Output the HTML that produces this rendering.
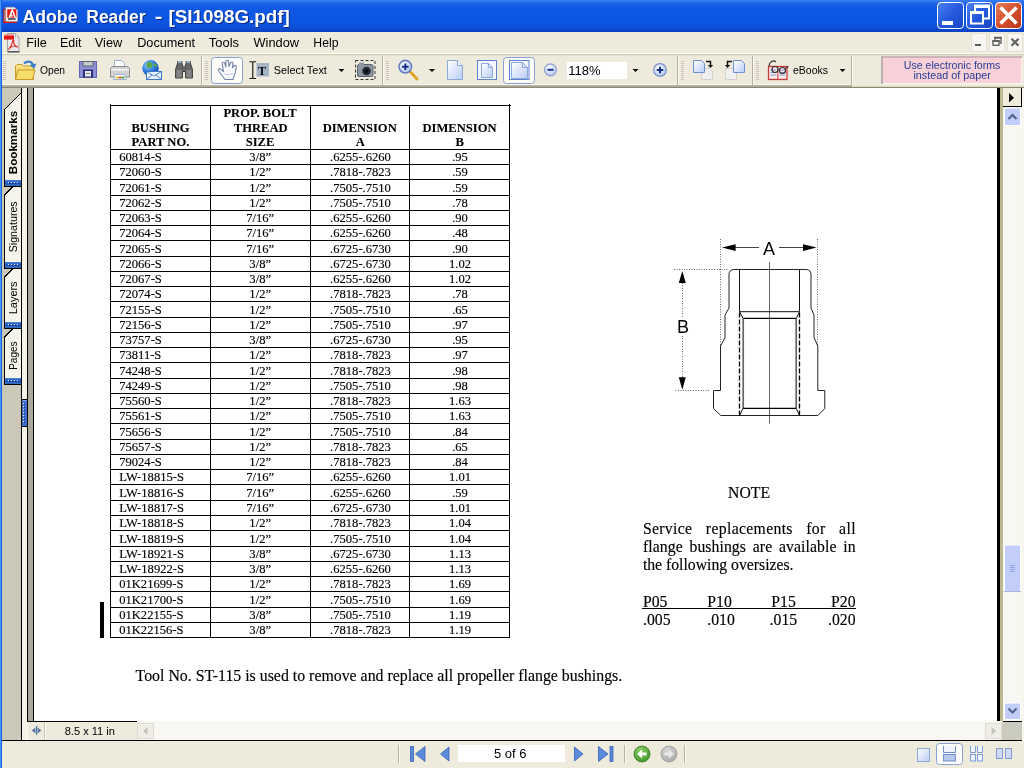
<!DOCTYPE html>
<html lang="en">
<head>
<meta charset="utf-8">
<title>Adobe Reader - [SI1098G.pdf]</title>
<style>
html,body{margin:0;padding:0}
body{width:1024px;height:768px;overflow:hidden;position:relative;background:#eeebdd;font-family:"Liberation Sans",sans-serif}
.a{position:absolute}
#ov{position:absolute;left:0;top:0;width:1024px;height:768px;will-change:transform}
text{white-space:pre}
</style>
</head>
<body>
<!-- ===== backgrounds ===== -->
<div class="a" id="titlebar" style="left:0;top:0;width:1024px;height:32px;background:linear-gradient(#3b82f3 0,#2a70ec 2px,#1a60e5 4px,#0e58e3 9px,#0c55e0 22px,#0d4dd4 28px,#0b45c8 31px,#0a3fbe 32px)"></div>
<div class="a" id="menubar" style="left:2px;top:32px;width:1022px;height:22px;background:#eeebdd"></div>
<div class="a" style="left:2px;top:53px;width:1022px;height:1px;background:#fbfaf5"></div>
<div class="a" style="left:2px;top:54px;width:1022px;height:1px;background:#cfccb4"></div>
<div class="a" style="left:2px;top:55px;width:1022px;height:1px;background:#e6e3cf"></div>
<div class="a" id="toolbar" style="left:2px;top:56px;width:1022px;height:29px;background:#eeebdd"></div>
<div class="a" style="left:2px;top:84px;width:850px;height:1px;background:#f7f6ee"></div>
<div class="a" style="left:2px;top:85px;width:850px;height:1px;background:#b9b6a8"></div>
<div class="a" style="left:2px;top:86px;width:850px;height:1px;background:#aba996"></div>
<div class="a" style="left:852px;top:86px;width:172px;height:1px;background:#d9d6ba"></div>
<div class="a" style="left:2px;top:87px;width:1022px;height:1px;background:#8b8973"></div>
<!-- document area -->
<div class="a" id="navpane" style="left:2px;top:88px;width:19px;height:652px;background:#ccc8b8"></div>
<div class="a" style="left:21px;top:88px;width:1px;height:652px;background:#000"></div>
<div class="a" style="left:22px;top:88px;width:5px;height:652px;background:#f4f3e6"></div>
<div class="a" style="left:27px;top:88px;width:1px;height:634px;background:#000"></div>
<div class="a" style="left:28px;top:88px;width:5px;height:633px;background:#aaa899"></div>
<div class="a" style="left:33px;top:88px;width:1px;height:634px;background:#000"></div>
<div class="a" id="page" style="left:34px;top:88px;width:963px;height:633px;background:#fff"></div>
<div class="a" style="left:997px;top:88px;width:3px;height:633px;background:#000"></div>
<div class="a" style="left:1000px;top:88px;width:3px;height:633px;background:#bdb992"></div>
<div class="a" id="vscroll" style="left:1003px;top:88px;width:21px;height:633px;background:#f8f7f2"></div>
<!-- horizontal scrollbar row -->
<div class="a" style="left:27px;top:721px;width:110px;height:1px;background:#000"></div>
<div class="a" style="left:27px;top:722px;width:110px;height:18px;background:#eeebdd"></div>
<div class="a" id="hscroll" style="left:137px;top:721px;width:865px;height:19px;background:#f8f7f2"></div>
<div class="a" style="left:1002px;top:722px;width:20px;height:18px;background:#cbcabf"></div>
<div class="a" style="left:1003px;top:721px;width:19px;height:1px;background:#000"></div>
<div class="a" style="left:1022px;top:88px;width:2px;height:680px;background:#f7f6ee"></div>
<div class="a" style="left:2px;top:740px;width:1020px;height:1px;background:#000"></div>
<div class="a" id="statusbar" style="left:2px;top:741px;width:1022px;height:27px;background:#eeebdd"></div>
<!-- window left border -->
<div class="a" style="left:0;top:0;width:1px;height:768px;background:#3c97ff"></div>
<div class="a" style="left:1px;top:0;width:1px;height:768px;background:#1c5fd9"></div>

<!-- ===== overlay: icons, text, pdf content ===== -->
<svg id="ov" width="1024" height="768" viewBox="0 0 1024 768">
<defs>
<linearGradient id="gBtn" x1="0" y1="0" x2="1" y2="1"><stop offset="0" stop-color="#4d83f0"/><stop offset=".5" stop-color="#2459dd"/><stop offset="1" stop-color="#1a47c4"/></linearGradient>
<linearGradient id="gCls" x1="0" y1="0" x2="1" y2="1"><stop offset="0" stop-color="#e8805e"/><stop offset=".5" stop-color="#d5502c"/><stop offset="1" stop-color="#b8351a"/></linearGradient>
<linearGradient id="gPg" x1="0" y1="0" x2="1" y2="1"><stop offset="0" stop-color="#fff"/><stop offset="1" stop-color="#b9cdf3"/></linearGradient>
<linearGradient id="gFold" x1="0" y1="0" x2="0" y2="1"><stop offset="0" stop-color="#fbe88c"/><stop offset="1" stop-color="#e6b93a"/></linearGradient>
<radialGradient id="gGlobe" cx=".35" cy=".3" r=".8"><stop offset="0" stop-color="#9fd3ff"/><stop offset=".5" stop-color="#2e7be0"/><stop offset="1" stop-color="#103f9e"/></radialGradient>
<radialGradient id="gLens" cx=".4" cy=".35" r=".7"><stop offset="0" stop-color="#fff"/><stop offset="1" stop-color="#a9c4ee"/></radialGradient>
<radialGradient id="gGreen" cx=".4" cy=".3" r=".8"><stop offset="0" stop-color="#8fd06a"/><stop offset="1" stop-color="#3a8f22"/></radialGradient>
<radialGradient id="gGrey" cx=".4" cy=".3" r=".8"><stop offset="0" stop-color="#d8d8d8"/><stop offset="1" stop-color="#a4a4a4"/></radialGradient>
<linearGradient id="gBar" x1="0" y1="0" x2="0" y2="1"><stop offset="0" stop-color="#4f86d8"/><stop offset=".4" stop-color="#2457c4"/><stop offset="1" stop-color="#3a6fb8"/></linearGradient>
</defs>

<!-- title bar -->
<g id="appicon">
  <path d="M3.300 9h3v12.300h10.500v1.700H3.300z" fill="#d41a14"/>
  <rect x="4.300" y="10" width="1" height="11" fill="#9a9a9a"/>
  <path d="M5.800 7.300h8.700l3 3v11H5.800z" fill="#fff" stroke="#a8a8a8" stroke-width=".7"/>
  <rect x="7.200" y="9.200" width="9.200" height="8.500" fill="#e01a14"/>
  <path d="M8.600 17.700l2.900-8.300h1.500l3 8.300h-1.700l-1.900-5.600l-1 2.900h1.100l.6 1.500h-2.300l-.4 1.200z" fill="#fff"/>
  <rect x="8" y="18.300" width="7.600" height="1.400" fill="#222"/>
</g>
<g font-size="19" font-weight="bold" fill="#0a2a8a"><text x="23.5" y="23.7" textLength="55.0" lengthAdjust="spacingAndGlyphs">Adobe</text><text x="87.3" y="23.7" textLength="59.2" lengthAdjust="spacingAndGlyphs">Reader</text><text x="155.8" y="23.7" textLength="7.6" lengthAdjust="spacingAndGlyphs">-</text><text x="169.4" y="23.7" textLength="121.5" lengthAdjust="spacingAndGlyphs">[SI1098G.pdf]</text></g>
<g font-size="19" font-weight="bold" fill="#fff"><text x="22.5" y="22.7" textLength="55.0" lengthAdjust="spacingAndGlyphs">Adobe</text><text x="86.3" y="22.7" textLength="59.2" lengthAdjust="spacingAndGlyphs">Reader</text><text x="154.8" y="22.7" textLength="7.6" lengthAdjust="spacingAndGlyphs">-</text><text x="168.4" y="22.7" textLength="121.5" lengthAdjust="spacingAndGlyphs">[SI1098G.pdf]</text></g>
<g id="winbtns">
  <rect x="937.5" y="2.5" width="26" height="26" rx="3.5" fill="url(#gBtn)" stroke="#fff"/>
  <rect x="942" y="21" width="11" height="4" fill="#fff"/>
  <rect x="966.5" y="2.5" width="26" height="26" rx="3.5" fill="url(#gBtn)" stroke="#fff"/>
  <path d="M975 12v-6.5h14v13h-5" fill="none" stroke="#fff" stroke-width="2"/><rect x="975" y="5" width="14" height="3" fill="#fff"/>
  <rect x="971" y="12" width="12" height="11.5" fill="none" stroke="#fff" stroke-width="2"/><rect x="970" y="11" width="14" height="3" fill="#fff"/>
  <rect x="995.5" y="2.5" width="26" height="26" rx="3.5" fill="url(#gCls)" stroke="#fff"/>
  <path d="M1000.5 7.5l16 16M1016.500 7.5l-16 16" stroke="#fff" stroke-width="3.6" fill="none"/>
</g>

<!-- menu bar -->
<g id="docicon">
  <path d="M7.500 33.500h8l3.500 3.500v14.500h-11.500z" fill="#ececec" stroke="#a6a6a6"/>
  <path d="M15.500 33.500v3.500h3.500z" fill="#fff" stroke="#a6a6a6" stroke-width=".8"/>
  <rect x="7.500" y="51.300" width="12" height="1.200" fill="#3a3a3a"/>
  <rect x="4" y="34.800" width="10" height="4.800" fill="#e61414"/>
  <rect x="4" y="34.800" width="10" height="1.200" fill="#f46a6a"/>
  <path d="M8.500 49.800c2.200-2.600 3.800-5.600 4.200-9c.2-1.400 1.300-1.200 1.100.3c-.4 2.800 1.400 5.200 4 6.200" fill="none" stroke="#dc3030" stroke-width="1.200"/>
  <path d="M9 48c2.600-1.500 5.600-2.100 8.600-1.700" fill="none" stroke="#dc3030" stroke-width=".9"/>
</g>
<g font-size="12.7" fill="#000">
  <text x="26.3" y="46.7" textLength="20.5" lengthAdjust="spacingAndGlyphs">File</text>
  <text x="60" y="46.7" textLength="21.5" lengthAdjust="spacingAndGlyphs">Edit</text>
  <text x="94.8" y="46.7" textLength="27.5" lengthAdjust="spacingAndGlyphs">View</text>
  <text x="137.2" y="46.7" textLength="57.8" lengthAdjust="spacingAndGlyphs">Document</text>
  <text x="208.8" y="46.7" textLength="30.2" lengthAdjust="spacingAndGlyphs">Tools</text>
  <text x="253.5" y="46.7" textLength="45.5" lengthAdjust="spacingAndGlyphs">Window</text>
  <text x="313.3" y="46.7" textLength="25.2" lengthAdjust="spacingAndGlyphs">Help</text>
</g>
<g id="mdibtns" fill="none">
  <rect x="971.5" y="33.500" width="15" height="18" fill="#f7f6f0" stroke="#e4e2d6"/>
  <rect x="989.5" y="33.500" width="15" height="18" fill="#f7f6f0" stroke="#e4e2d6"/>
  <rect x="1007.5" y="33.500" width="15" height="18" fill="#f7f6f0" stroke="#e4e2d6"/>
  <rect x="975" y="44" width="6" height="2" fill="#5e5e5e"/>
  <path d="M995 40v-2.500h6v5.500h-1.500" stroke="#5e5e5e" stroke-width="1.300"/><rect x="994.400" y="37" width="7.200" height="1.600" fill="#5e5e5e"/>
  <rect x="993" y="41" width="6" height="4.300" stroke="#5e5e5e" stroke-width="1.300"/><rect x="992.400" y="40" width="7.200" height="1.800" fill="#5e5e5e"/>
  <path d="M1011.500 38.800l7 7M1018.500 38.800l-7 7" stroke="#5e5e5e" stroke-width="2.100"/>
</g>

<!-- toolbar grippers + separators -->
<g id="grips" shape-rendering="crispEdges">
  <g fill="#cfc3c0">
    <rect x="3" y="61" width="3" height="1"/><rect x="3" y="63" width="3" height="1"/><rect x="3" y="65" width="3" height="1"/><rect x="3" y="67" width="3" height="1"/><rect x="3" y="69" width="3" height="1"/><rect x="3" y="71" width="3" height="1"/><rect x="3" y="73" width="3" height="1"/><rect x="3" y="75" width="3" height="1"/><rect x="3" y="77" width="3" height="1"/><rect x="3" y="79" width="3" height="1"/>
    <rect x="205" y="61" width="3" height="1"/><rect x="205" y="63" width="3" height="1"/><rect x="205" y="65" width="3" height="1"/><rect x="205" y="67" width="3" height="1"/><rect x="205" y="69" width="3" height="1"/><rect x="205" y="71" width="3" height="1"/><rect x="205" y="73" width="3" height="1"/><rect x="205" y="75" width="3" height="1"/><rect x="205" y="77" width="3" height="1"/><rect x="205" y="79" width="3" height="1"/>
    <rect x="386" y="61" width="3" height="1"/><rect x="386" y="63" width="3" height="1"/><rect x="386" y="65" width="3" height="1"/><rect x="386" y="67" width="3" height="1"/><rect x="386" y="69" width="3" height="1"/><rect x="386" y="71" width="3" height="1"/><rect x="386" y="73" width="3" height="1"/><rect x="386" y="75" width="3" height="1"/><rect x="386" y="77" width="3" height="1"/><rect x="386" y="79" width="3" height="1"/>
    <rect x="681" y="61" width="3" height="1"/><rect x="681" y="63" width="3" height="1"/><rect x="681" y="65" width="3" height="1"/><rect x="681" y="67" width="3" height="1"/><rect x="681" y="69" width="3" height="1"/><rect x="681" y="71" width="3" height="1"/><rect x="681" y="73" width="3" height="1"/><rect x="681" y="75" width="3" height="1"/><rect x="681" y="77" width="3" height="1"/><rect x="681" y="79" width="3" height="1"/>
    <rect x="756" y="61" width="3" height="1"/><rect x="756" y="63" width="3" height="1"/><rect x="756" y="65" width="3" height="1"/><rect x="756" y="67" width="3" height="1"/><rect x="756" y="69" width="3" height="1"/><rect x="756" y="71" width="3" height="1"/><rect x="756" y="73" width="3" height="1"/><rect x="756" y="75" width="3" height="1"/><rect x="756" y="77" width="3" height="1"/><rect x="756" y="79" width="3" height="1"/>
  </g>
  <g fill="#b5b2a0">
    <rect x="201" y="56" width="1" height="29"/><rect x="382" y="56" width="1" height="29"/><rect x="677" y="56" width="1" height="29"/><rect x="752" y="56" width="1" height="29"/><rect x="851" y="56" width="1" height="29"/>
  </g>
  <g fill="#fbfaf4">
    <rect x="202" y="56" width="1" height="29"/><rect x="383" y="56" width="1" height="29"/><rect x="678" y="56" width="1" height="29"/><rect x="753" y="56" width="1" height="29"/><rect x="852" y="56" width="1" height="29"/>
  </g>
</g>

<!-- toolbar: Open -->
<g id="icoOpen">
  <path d="M15.500 79.500v-13.500l1.500-1.500h5l1.500 1.500h10v13.500z" fill="url(#gFold)" stroke="#c89a28"/>
  <path d="M15.500 79.500l2.500-9.500h17l-2.500 9.500z" fill="#f7dc6e" stroke="#c89a28"/>
  <path d="M24 63.500c3-3 7.500-2.500 9 1.500" fill="none" stroke="#3f7fc8" stroke-width="2.200"/>
  <path d="M29.500 65l4.800 3.800l2.200-5.300z" fill="#3f7fc8"/>
</g>
<text x="39.9" y="73.500" font-size="10.8" textLength="25.2" lengthAdjust="spacingAndGlyphs">Open</text>
<!-- save -->
<g id="icoSave">
  <rect x="79.500" y="61.500" width="17" height="16" fill="#8d8fd6" stroke="#6064b8"/>
  <rect x="83" y="61.500" width="10" height="4.500" fill="#c9c9cf" stroke="#55575f" stroke-width=".8"/>
  <rect x="83" y="69.500" width="10" height="8" fill="#2c2e7a"/>
  <rect x="85" y="71" width="6" height="5.500" fill="#e9e9ee"/>
  <rect x="86" y="73" width="4" height="1" fill="#777"/>
</g>
<!-- print -->
<g id="icoPrint">
  <path d="M114.500 67v-6.500h7l3 3v3.500z" fill="#fff" stroke="#9bb0d8"/>
  <path d="M112 66.500h16l1.500 2v8.500h-19v-8.500z" fill="#d2d2d2" stroke="#8c8c8c"/>
  <rect x="111" y="69" width="18" height="1.500" fill="#f4f4f4"/>
  <path d="M113.500 79.500l1.500-5h10l1.500 5z" fill="#fff" stroke="#9bb0d8"/>
  <rect x="115.500" y="76.500" width="3" height="2" fill="#e8c020"/><rect x="118.500" y="76.500" width="3" height="2" fill="#e06030"/><rect x="121.500" y="76.500" width="3" height="2" fill="#50a040"/>
</g>
<!-- email globe -->
<g id="icoMail">
  <circle cx="150.500" cy="68.300" r="8.200" fill="url(#gGlobe)"/>
  <path d="M147 62.500c2.500-1.200 5 0 5.500 2s-1.500 4-3.500 3.800s-3-3.300-2-5.800z" fill="#5aa845"/>
  <path d="M153.500 63c2 .3 3.500 1.800 3.800 3.500l-3 .3z" fill="#5aa845"/>
  <rect x="146.500" y="71.500" width="15" height="8" fill="#eaf2ff" stroke="#3f78cc"/>
  <path d="M146.500 71.500l7.500 4.500l7.500-4.500M146.500 79.500l5.500-4.500M161.500 79.500l-5.500-4.500" fill="none" stroke="#3f78cc" stroke-width=".9"/>
</g>
<!-- binoculars -->
<g id="icoFind">
  <path d="M175.500 78v-8.500l2-6v-2h4.500v2l1.500 4h1l1.500-4v-2h4.500v2l2 6v8.500h-7v-6.500h-3v6.500z" fill="#666" stroke="#444"/>
  <rect x="176.500" y="70" width="5" height="7.500" fill="#858585"/><rect x="186.500" y="70" width="5" height="7.500" fill="#858585"/>
  <rect x="178" y="61" width="3.500" height="2" fill="#9cb6d8"/><rect x="186.500" y="61" width="3.500" height="2" fill="#9cb6d8"/>
</g>
<!-- hand tool (selected) -->
<rect x="211.500" y="57.500" width="31" height="26" rx="3" fill="#fdfdfb" stroke="#8aa0d0"/>
<g id="icoHand">
  <path d="M225 79.500L221.200 74.500L218.600 70.800c-.9-1.500.6-2.900 2-1.700L223.400 71.600L222.300 63.800c-.2-1.700 2.100-2.100 2.500-.4L225.900 67L225.800 61.600c0-1.800 2.600-1.900 2.700-.1L229 66.500L230.500 63c.5-1.600 2.800-1.100 2.500.6L232.300 67.800L234 65.900c1-1.300 2.800-.3 2.300 1.200L235.200 72.500C234.700 75 233.600 76.500 233.200 79.500z" fill="#f7f9fd" stroke="#7482a2" stroke-width="1.100" stroke-linejoin="round"/>
  <path d="M224 73.500c2 1.500 6 1.800 9-.2" fill="none" stroke="#c5cde0" stroke-width="1"/>
</g>
<!-- select text -->
<g id="icoSel">
  <path d="M249.500 61.700h2.500l.8.800l.8-.800h2.500M252.800 62.500v15.500M249.500 78.500h2.500l.8-.800l.8.800h2.500" stroke="#111" stroke-width="1.100" fill="none"/>
  <rect x="256.500" y="63" width="12.500" height="13.500" fill="#a3b3c6"/>
  <text x="257.800" y="74.600" font-family="'Liberation Serif',serif" font-weight="bold" font-size="12.700" fill="#111">T</text>
</g>
<text x="273.700" y="73.500" font-size="10.8" textLength="53.200" lengthAdjust="spacingAndGlyphs">Select Text</text>
<path d="M338.500 69h6l-3 3z" fill="#000"/>
<!-- snapshot -->
<g id="icoSnap">
  <rect x="355.500" y="60.500" width="19.500" height="19" fill="none" stroke="#333" stroke-dasharray="3 2"/>
  <rect x="357.500" y="64.500" width="15.500" height="12" rx="1.500" fill="#8e97a4" stroke="#5a6270"/>
  <rect x="359" y="62.500" width="5" height="2.500" fill="#8e97a4"/>
  <circle cx="366.500" cy="71" r="4.300" fill="#222a36"/><circle cx="366.500" cy="71" r="2" fill="#0c0f14"/>
</g>
<!-- zoom in -->
<g id="icoZoom">
  <path d="M410 71.500l7 7.500" stroke="#e0a526" stroke-width="3" stroke-linecap="round"/>
  <circle cx="405.300" cy="66.700" r="6.300" fill="url(#gLens)" stroke="#6a7cc0" stroke-width="1.600"/>
  <path d="M402 66.700h6.600M405.300 63.400v6.600" stroke="#1a2f8c" stroke-width="2"/>
</g>
<path d="M429 69h6l-3 3z" fill="#000"/>
<!-- page icons -->
<g id="icoActual">
  <path d="M447.500 60.500h10l5 5v14h-15z" fill="url(#gPg)" stroke="#8fa8dc"/>
  <path d="M457.500 60.500v5h5" fill="#eef3fc" stroke="#8fa8dc"/>
</g>
<g id="icoFitPage">
  <rect x="477.500" y="60.500" width="19" height="19" fill="#f4f7fd" stroke="#5f82cc"/>
  <path d="M481.500 63.500h7l4 4v10h-11z" fill="url(#gPg)" stroke="#8fa8dc"/>
  <path d="M488.500 63.500v4h4" fill="none" stroke="#8fa8dc"/>
</g>
<rect x="503.500" y="57.500" width="31" height="26" rx="3" fill="#fdfdfb" stroke="#8aa0d0"/>
<g id="icoFitWidth">
  <rect x="509.500" y="60.500" width="19.500" height="19" fill="#f4f7fd" stroke="#5f82cc"/>
  <path d="M511.500 62.500h11l5 5v11h-16z" fill="url(#gPg)" stroke="#8fa8dc"/>
  <path d="M522.500 62.500v5h5" fill="none" stroke="#8fa8dc"/>
</g>
<!-- zoom out / field / zoom in -->
<circle cx="550.500" cy="69.800" r="6" fill="url(#gLens)" stroke="#8fa0d0" stroke-width="1.200"/>
<rect x="547.500" y="68.800" width="6" height="2" fill="#1a2f8c"/>
<rect x="567" y="62" width="60" height="17" fill="#fff"/>
<text x="568.300" y="74.600" font-size="13" fill="#000">118%</text>
<path d="M632.500 69h6l-3 3z" fill="#000"/>
<circle cx="660" cy="70" r="6.300" fill="url(#gLens)" stroke="#7f90c8" stroke-width="1.200"/>
<path d="M656.800 70h6.400M660 66.800v6.400" stroke="#1a2f8c" stroke-width="2"/>
<!-- rotate -->
<g id="icoRotCW">
  <path d="M701.500 68.500h8l3 3v8h-11z" fill="#f0f0f0" stroke="#b4b4b4" stroke-dasharray="1 1"/>
  <path d="M693.500 60.500h8l3 3v9h-11z" fill="url(#gPg)" stroke="#6f90d4"/>
  <path d="M706 61.500h4.500v4" fill="none" stroke="#111" stroke-width="1.500"/><path d="M707.800 65h5.400l-2.700 3z" fill="#111"/>
</g>
<g id="icoRotCCW">
  <path d="M725.500 68.500h8l3 3v8h-11z" fill="#f0f0f0" stroke="#b4b4b4" stroke-dasharray="1 1"/>
  <path d="M733.500 60.500h8l3 3v9h-11z" fill="url(#gPg)" stroke="#6f90d4"/>
  <path d="M732 61.500h-4.500v4" fill="none" stroke="#111" stroke-width="1.500"/><path d="M724.800 65h5.400l-2.700 3z" fill="#111"/>
</g>
<!-- eBooks -->
<g id="icoEbooks">
  <rect x="768.500" y="66.500" width="18.500" height="13" fill="#f6e9ea" stroke="#c83a3a" stroke-width="1.300"/>
  <path d="M777.800 66.500v13" stroke="#c83a3a"/>
  <path d="M770.500 70h5.500M770.500 72.500h5.500M770.500 75h5.500M779.500 70h5.500M779.500 72.500h5.500M779.500 75h5.500" stroke="#7d8ec4" stroke-width=".9"/>
  <path d="M769 66c.5-4 4-6.500 7-4" fill="none" stroke="#333" stroke-width="1.200"/>
  <circle cx="775" cy="69.500" r="3" fill="none" stroke="#333" stroke-width="1.200"/><circle cx="782.500" cy="70.500" r="3" fill="none" stroke="#333" stroke-width="1.200"/>
  <path d="M785 68.500l3.500-2" stroke="#333" stroke-width="1.200"/>
</g>
<text x="793" y="73.700" font-size="10.8" textLength="35" lengthAdjust="spacingAndGlyphs">eBooks</text>
<path d="M839.500 69h6l-3 3z" fill="#000"/>
<!-- pink promo -->
<rect x="881" y="56" width="141" height="28" fill="#f7d0d8"/>
<rect x="881" y="56" width="141" height="2" fill="#cdb4b8"/><rect x="881" y="56" width="2" height="28" fill="#bdb0b0"/>
<rect x="883" y="83" width="139" height="1" fill="#fdf3f4"/><rect x="1021" y="58" width="1" height="26" fill="#fdf3f4"/>
<g font-size="11" fill="#263c96">
  <text x="903.800" y="68.800" textLength="96.600" lengthAdjust="spacingAndGlyphs">Use electronic forms</text>
  <text x="913.400" y="78.600" textLength="77.400" lengthAdjust="spacingAndGlyphs">instead of paper</text>
</g>

<!-- nav pane tabs -->
<g id="navtabs">
  <g fill="#f5f4ea">
    <path d="M21 92.500L5 109v78h16z"/><path d="M12.500 187L5 194.500V269h16v-82z"/><path d="M12.500 269L5 276.500V329h16v-60z"/><path d="M12.500 329L5 336.500V385h16v-56z"/>
  </g>
  <g fill="url(#gBar)">
    <rect x="5" y="180" width="16" height="6"/><rect x="5" y="262" width="16" height="6"/><rect x="5" y="322" width="16" height="6"/><rect x="5" y="378" width="16" height="6"/>
  </g>
  <g fill="#e8eefc">
    <rect x="8" y="182" width="1" height="1"/><rect x="11" y="182" width="1" height="1"/><rect x="14" y="182" width="1" height="1"/><rect x="17" y="182" width="1" height="1"/>
    <rect x="8" y="264" width="1" height="1"/><rect x="11" y="264" width="1" height="1"/><rect x="14" y="264" width="1" height="1"/><rect x="17" y="264" width="1" height="1"/>
    <rect x="8" y="324" width="1" height="1"/><rect x="11" y="324" width="1" height="1"/><rect x="14" y="324" width="1" height="1"/><rect x="17" y="324" width="1" height="1"/>
    <rect x="8" y="380" width="1" height="1"/><rect x="11" y="380" width="1" height="1"/><rect x="14" y="380" width="1" height="1"/><rect x="17" y="380" width="1" height="1"/>
  </g>
  <g fill="#14256e"><rect x="9" y="183" width="1" height="1"/><rect x="12" y="183" width="1" height="1"/><rect x="15" y="183" width="1" height="1"/><rect x="18" y="183" width="1" height="1"/><rect x="9" y="265" width="1" height="1"/><rect x="12" y="265" width="1" height="1"/><rect x="15" y="265" width="1" height="1"/><rect x="18" y="265" width="1" height="1"/><rect x="9" y="325" width="1" height="1"/><rect x="12" y="325" width="1" height="1"/><rect x="15" y="325" width="1" height="1"/><rect x="18" y="325" width="1" height="1"/><rect x="9" y="381" width="1" height="1"/><rect x="12" y="381" width="1" height="1"/><rect x="15" y="381" width="1" height="1"/><rect x="18" y="381" width="1" height="1"/></g>
  <g fill="none" stroke="#000" stroke-width="1" shape-rendering="crispEdges">
    <path d="M21.500 92.500L4.500 109.500V186.500H21"/>
    <path d="M12.500 187L4.500 195V268.500H21"/>
    <path d="M12.500 269L4.500 277V328.500H21"/>
    <path d="M12.500 329L4.500 337V384.500H21"/>
  </g>
  <text transform="translate(17.200 174.200) rotate(-90)" font-size="11.500" font-weight="bold" textLength="63.300" lengthAdjust="spacingAndGlyphs">Bookmarks</text>
  <text transform="translate(17.200 252.300) rotate(-90)" font-size="10.800" textLength="51" lengthAdjust="spacingAndGlyphs">Signatures</text>
  <text transform="translate(17.200 314.200) rotate(-90)" font-size="10.800" textLength="32.800" lengthAdjust="spacingAndGlyphs">Layers</text>
  <text transform="translate(17.200 369.800) rotate(-90)" font-size="10.800" textLength="28.300" lengthAdjust="spacingAndGlyphs">Pages</text>
</g>

<g id="splitter" shape-rendering="crispEdges">
  <rect x="22" y="399" width="5" height="28" fill="#000"/>
  <rect x="22" y="400" width="5" height="26" fill="#3f6fd0"/>
  <rect x="22" y="400" width="5" height="1" fill="#7d9ae8"/>
  <rect x="23" y="403" width="1" height="1" fill="#eef2ff"/><rect x="24" y="404" width="1" height="1" fill="#1a2f7a"/><rect x="23" y="406" width="1" height="1" fill="#eef2ff"/><rect x="24" y="407" width="1" height="1" fill="#1a2f7a"/><rect x="23" y="409" width="1" height="1" fill="#eef2ff"/><rect x="24" y="410" width="1" height="1" fill="#1a2f7a"/><rect x="23" y="412" width="1" height="1" fill="#eef2ff"/><rect x="24" y="413" width="1" height="1" fill="#1a2f7a"/><rect x="23" y="415" width="1" height="1" fill="#eef2ff"/><rect x="24" y="416" width="1" height="1" fill="#1a2f7a"/><rect x="23" y="418" width="1" height="1" fill="#eef2ff"/><rect x="24" y="419" width="1" height="1" fill="#1a2f7a"/><rect x="23" y="421" width="1" height="1" fill="#eef2ff"/><rect x="24" y="422" width="1" height="1" fill="#1a2f7a"/>
</g>
<!-- vertical scrollbar -->
<g id="vsb">
  <rect x="1003" y="88" width="19" height="19" fill="#efecdc"/>
  <rect x="1021" y="88" width="1" height="19" fill="#000"/><rect x="1003" y="106" width="19" height="1" fill="#000"/>
  <path d="M1009 93v9.500l5-4.750z" fill="#000"/>
  <rect x="1004.500" y="108" width="16" height="17.500" rx="1.500" fill="#c3cdf9" stroke="#fff"/>
  <path d="M1008.500 119l4-4l4 4" fill="none" stroke="#4d6185" stroke-width="2"/>
  <rect x="1004.500" y="545" width="16" height="46.500" rx="1.500" fill="#c3cdf9" stroke="#fff"/>
  <rect x="1004" y="591" width="17" height="1" fill="#a7b4e0"/>
  <path d="M1010 565.500h5M1010 567.500h5M1010 569.500h5M1010 571.500h5" stroke="#8fa2e6" stroke-width="1"/>
  <rect x="1004.500" y="703" width="16" height="16.500" rx="1.500" fill="#c3cdf9" stroke="#fff"/>
  <path d="M1008.500 708.500l4 4l4-4" fill="none" stroke="#4d6185" stroke-width="2"/>
</g>
<!-- horizontal scrollbar -->
<g id="hsb">
  <rect x="137.500" y="723.500" width="16" height="15" fill="#eeede6" stroke="#dddbd0"/>
  <path d="M147.500 727v8l-4.500-4z" fill="#c5c4bb"/>
  <rect x="985.500" y="723.500" width="16" height="15" fill="#eeede6" stroke="#dddbd0"/>
  <path d="M991.500 727v8l4.500-4z" fill="#c5c4bb"/>
</g>
<!-- page size box -->
<g id="psize">
  <rect x="27" y="722" width="1" height="18" fill="#fbfaf4"/>
  <rect x="44" y="722" width="1" height="18" fill="#c9c6b4"/><rect x="45" y="722" width="1" height="18" fill="#fbfaf4"/>
  <path d="M31.800 730.500l3.600-2.900v5.800zM41.300 730.500l-3.600-2.900v5.800z" fill="#5b6ea8"/>
  <rect x="36" y="726" width="1.200" height="9" fill="#3f7f9a"/>
  <text x="64.700" y="735" font-size="11" textLength="50.300" lengthAdjust="spacingAndGlyphs">8.5 x 11 in</text>
</g>

<!-- status bar -->
<g id="status">
  <g fill="#b5b2a0"><rect x="398" y="745" width="1" height="18"/><rect x="624" y="745" width="1" height="18"/><rect x="684" y="745" width="1" height="18"/></g>
  <g fill="#fbfaf4"><rect x="399" y="745" width="1" height="18"/><rect x="625" y="745" width="1" height="18"/><rect x="685" y="745" width="1" height="18"/></g>
  <g fill="#5a8ad8" stroke="#3565b8" stroke-width=".8">
    <rect x="410.500" y="746.500" width="3" height="15"/><path d="M425 746.500v15l-9.500-7.500z"/>
    <path d="M449 747v14l-8.500-7z"/>
    <path d="M574.500 747v14l8.500-7z"/>
    <path d="M598.500 746.500v15l9.500-7.500z"/><rect x="610" y="746.500" width="3" height="15"/>
  </g>
  <rect x="458" y="745" width="107" height="17" fill="#fff"/>
  <text x="494" y="758" font-size="13">5 of 6</text>
  <circle cx="642" cy="754" r="8" fill="url(#gGreen)" stroke="#2f7a1c" stroke-width=".8"/>
  <path d="M637 754l5-4.500v3h4.500v3h-4.500v3z" fill="#fff"/>
  <circle cx="669" cy="754" r="8" fill="url(#gGrey)" stroke="#9a9a9a" stroke-width=".8"/>
  <path d="M674 754l-5-4.500v3h-4.500v3h4.500v3z" fill="#e9e9e9"/>
  <!-- page layout buttons -->
  <rect x="917.500" y="748.500" width="12" height="13" fill="url(#gPg)" stroke="#8fa8dc"/>
  <rect x="936.500" y="743.500" width="26" height="21" rx="3" fill="#fdfdfb" stroke="#8aa0d0"/>
  <path d="M943.500 746v6.500h12v-6.500" fill="#eef3fd" stroke="#6f8fd0"/><rect x="943.500" y="754.500" width="12" height="6.500" fill="#b9c8f0" stroke="#6f8fd0"/>
  <g fill="#eef3fd" stroke="#7f9bd6"><path d="M970.500 746v6.500h5v-6.500"/><path d="M977.500 746v6.500h5v-6.500"/><rect x="970.500" y="754.500" width="5" height="6.500"/><rect x="977.500" y="754.500" width="5" height="6.500"/></g>
  <g fill="#cfdaf6" stroke="#7f9bd6"><rect x="996.500" y="748.500" width="6" height="10"/><rect x="1005.500" y="748.500" width="6" height="10"/></g>
</g>


<!-- ===== PDF page content ===== -->
<g fill="#000" shape-rendering="crispEdges">
<rect x="110" y="105" width="401" height="1"/>
<rect x="110" y="149" width="400" height="1"/>
<rect x="110" y="164" width="400" height="1"/>
<rect x="110" y="179" width="400" height="1"/>
<rect x="110" y="195" width="400" height="1"/>
<rect x="110" y="210" width="400" height="1"/>
<rect x="110" y="225" width="400" height="1"/>
<rect x="110" y="240" width="400" height="1"/>
<rect x="110" y="256" width="400" height="1"/>
<rect x="110" y="271" width="400" height="1"/>
<rect x="110" y="286" width="400" height="1"/>
<rect x="110" y="301" width="400" height="1"/>
<rect x="110" y="317" width="400" height="1"/>
<rect x="110" y="332" width="400" height="1"/>
<rect x="110" y="347" width="400" height="1"/>
<rect x="110" y="362" width="400" height="1"/>
<rect x="110" y="378" width="400" height="1"/>
<rect x="110" y="393" width="400" height="1"/>
<rect x="110" y="408" width="400" height="1"/>
<rect x="110" y="423" width="400" height="1"/>
<rect x="110" y="439" width="400" height="1"/>
<rect x="110" y="454" width="400" height="1"/>
<rect x="110" y="469" width="400" height="1"/>
<rect x="110" y="484" width="400" height="1"/>
<rect x="110" y="500" width="400" height="1"/>
<rect x="110" y="515" width="400" height="1"/>
<rect x="110" y="530" width="400" height="1"/>
<rect x="110" y="546" width="400" height="1"/>
<rect x="110" y="561" width="400" height="1"/>
<rect x="110" y="576" width="400" height="1"/>
<rect x="110" y="591" width="400" height="1"/>
<rect x="110" y="607" width="400" height="1"/>
<rect x="110" y="622" width="400" height="1"/>
<rect x="110" y="637" width="400" height="1"/>
<rect x="110" y="104" width="1" height="534"/>
<rect x="509" y="104" width="1" height="534"/>
<rect x="210" y="105" width="1" height="533"/>
<rect x="310" y="105" width="1" height="533"/>
<rect x="409" y="105" width="1" height="533"/>
<rect x="100" y="602" width="4" height="36"/>
</g>
<g font-family="'Liberation Serif', serif" font-size="12.59" font-weight="bold" text-anchor="middle" fill="#000" stroke="#000" stroke-width=".1">
<text x="160.5" y="132">BUSHING</text>
<text x="160.5" y="146">PART NO.</text>
<text x="260" y="117">PROP. BOLT</text>
<text x="260.7" y="132">THREAD</text>
<text x="260" y="146">SIZE</text>
<text x="359.7" y="132">DIMENSION</text>
<text x="360.3" y="146">A</text>
<text x="459.5" y="132">DIMENSION</text>
<text x="459.8" y="146">B</text>
</g>
<g font-family="'Liberation Serif', serif" font-size="12.59" fill="#000" stroke="#000" stroke-width=".15">
<text x="119.2" y="161">60814-S</text><text x="260.2" y="161" text-anchor="middle">3/8”</text><text x="360.5" y="161" text-anchor="middle">.6255-.6260</text><text x="460" y="161" text-anchor="middle">.95</text>
<text x="119.2" y="176">72060-S</text><text x="260.2" y="176" text-anchor="middle">1/2”</text><text x="360.5" y="176" text-anchor="middle">.7818-.7823</text><text x="460" y="176" text-anchor="middle">.59</text>
<text x="119.2" y="192">72061-S</text><text x="260.2" y="192" text-anchor="middle">1/2”</text><text x="360.5" y="192" text-anchor="middle">.7505-.7510</text><text x="460" y="192" text-anchor="middle">.59</text>
<text x="119.2" y="207">72062-S</text><text x="260.2" y="207" text-anchor="middle">1/2”</text><text x="360.5" y="207" text-anchor="middle">.7505-.7510</text><text x="460" y="207" text-anchor="middle">.78</text>
<text x="119.2" y="222">72063-S</text><text x="260.2" y="222" text-anchor="middle">7/16”</text><text x="360.5" y="222" text-anchor="middle">.6255-.6260</text><text x="460" y="222" text-anchor="middle">.90</text>
<text x="119.2" y="237">72064-S</text><text x="260.2" y="237" text-anchor="middle">7/16”</text><text x="360.5" y="237" text-anchor="middle">.6255-.6260</text><text x="460" y="237" text-anchor="middle">.48</text>
<text x="119.2" y="253">72065-S</text><text x="260.2" y="253" text-anchor="middle">7/16”</text><text x="360.5" y="253" text-anchor="middle">.6725-.6730</text><text x="460" y="253" text-anchor="middle">.90</text>
<text x="119.2" y="268">72066-S</text><text x="260.2" y="268" text-anchor="middle">3/8”</text><text x="360.5" y="268" text-anchor="middle">.6725-.6730</text><text x="460" y="268" text-anchor="middle">1.02</text>
<text x="119.2" y="283">72067-S</text><text x="260.2" y="283" text-anchor="middle">3/8”</text><text x="360.5" y="283" text-anchor="middle">.6255-.6260</text><text x="460" y="283" text-anchor="middle">1.02</text>
<text x="119.2" y="298">72074-S</text><text x="260.2" y="298" text-anchor="middle">1/2”</text><text x="360.5" y="298" text-anchor="middle">.7818-.7823</text><text x="460" y="298" text-anchor="middle">.78</text>
<text x="119.2" y="314">72155-S</text><text x="260.2" y="314" text-anchor="middle">1/2”</text><text x="360.5" y="314" text-anchor="middle">.7505-.7510</text><text x="460" y="314" text-anchor="middle">.65</text>
<text x="119.2" y="329">72156-S</text><text x="260.2" y="329" text-anchor="middle">1/2”</text><text x="360.5" y="329" text-anchor="middle">.7505-.7510</text><text x="460" y="329" text-anchor="middle">.97</text>
<text x="119.2" y="344">73757-S</text><text x="260.2" y="344" text-anchor="middle">3/8”</text><text x="360.5" y="344" text-anchor="middle">.6725-.6730</text><text x="460" y="344" text-anchor="middle">.95</text>
<text x="119.2" y="359">73811-S</text><text x="260.2" y="359" text-anchor="middle">1/2”</text><text x="360.5" y="359" text-anchor="middle">.7818-.7823</text><text x="460" y="359" text-anchor="middle">.97</text>
<text x="119.2" y="375">74248-S</text><text x="260.2" y="375" text-anchor="middle">1/2”</text><text x="360.5" y="375" text-anchor="middle">.7818-.7823</text><text x="460" y="375" text-anchor="middle">.98</text>
<text x="119.2" y="390">74249-S</text><text x="260.2" y="390" text-anchor="middle">1/2”</text><text x="360.5" y="390" text-anchor="middle">.7505-.7510</text><text x="460" y="390" text-anchor="middle">.98</text>
<text x="119.2" y="405">75560-S</text><text x="260.2" y="405" text-anchor="middle">1/2”</text><text x="360.5" y="405" text-anchor="middle">.7818-.7823</text><text x="460" y="405" text-anchor="middle">1.63</text>
<text x="119.2" y="420">75561-S</text><text x="260.2" y="420" text-anchor="middle">1/2”</text><text x="360.5" y="420" text-anchor="middle">.7505-.7510</text><text x="460" y="420" text-anchor="middle">1.63</text>
<text x="119.2" y="436">75656-S</text><text x="260.2" y="436" text-anchor="middle">1/2”</text><text x="360.5" y="436" text-anchor="middle">.7505-.7510</text><text x="460" y="436" text-anchor="middle">.84</text>
<text x="119.2" y="451">75657-S</text><text x="260.2" y="451" text-anchor="middle">1/2”</text><text x="360.5" y="451" text-anchor="middle">.7818-.7823</text><text x="460" y="451" text-anchor="middle">.65</text>
<text x="119.2" y="466">79024-S</text><text x="260.2" y="466" text-anchor="middle">1/2”</text><text x="360.5" y="466" text-anchor="middle">.7818-.7823</text><text x="460" y="466" text-anchor="middle">.84</text>
<text x="119.2" y="481">LW-18815-S</text><text x="260.2" y="481" text-anchor="middle">7/16”</text><text x="360.5" y="481" text-anchor="middle">.6255-.6260</text><text x="460" y="481" text-anchor="middle">1.01</text>
<text x="119.2" y="497">LW-18816-S</text><text x="260.2" y="497" text-anchor="middle">7/16”</text><text x="360.5" y="497" text-anchor="middle">.6255-.6260</text><text x="460" y="497" text-anchor="middle">.59</text>
<text x="119.2" y="512">LW-18817-S</text><text x="260.2" y="512" text-anchor="middle">7/16”</text><text x="360.5" y="512" text-anchor="middle">.6725-.6730</text><text x="460" y="512" text-anchor="middle">1.01</text>
<text x="119.2" y="527">LW-18818-S</text><text x="260.2" y="527" text-anchor="middle">1/2”</text><text x="360.5" y="527" text-anchor="middle">.7818-.7823</text><text x="460" y="527" text-anchor="middle">1.04</text>
<text x="119.2" y="543">LW-18819-S</text><text x="260.2" y="543" text-anchor="middle">1/2”</text><text x="360.5" y="543" text-anchor="middle">.7505-.7510</text><text x="460" y="543" text-anchor="middle">1.04</text>
<text x="119.2" y="558">LW-18921-S</text><text x="260.2" y="558" text-anchor="middle">3/8”</text><text x="360.5" y="558" text-anchor="middle">.6725-.6730</text><text x="460" y="558" text-anchor="middle">1.13</text>
<text x="119.2" y="573">LW-18922-S</text><text x="260.2" y="573" text-anchor="middle">3/8”</text><text x="360.5" y="573" text-anchor="middle">.6255-.6260</text><text x="460" y="573" text-anchor="middle">1.13</text>
<text x="119.2" y="588">01K21699-S</text><text x="260.2" y="588" text-anchor="middle">1/2”</text><text x="360.5" y="588" text-anchor="middle">.7818-.7823</text><text x="460" y="588" text-anchor="middle">1.69</text>
<text x="119.2" y="604">01K21700-S</text><text x="260.2" y="604" text-anchor="middle">1/2”</text><text x="360.5" y="604" text-anchor="middle">.7505-.7510</text><text x="460" y="604" text-anchor="middle">1.69</text>
<text x="119.2" y="619">01K22155-S</text><text x="260.2" y="619" text-anchor="middle">3/8”</text><text x="360.5" y="619" text-anchor="middle">.7505-.7510</text><text x="460" y="619" text-anchor="middle">1.19</text>
<text x="119.2" y="634">01K22156-S</text><text x="260.2" y="634" text-anchor="middle">3/8”</text><text x="360.5" y="634" text-anchor="middle">.7818-.7823</text><text x="460" y="634" text-anchor="middle">1.19</text>
</g>
<g id="diagram" fill="none" stroke="#000" stroke-width="1">
  <!-- extension / dimension lines (dotted) -->
  <g stroke="#666" stroke-width="1" stroke-dasharray="1 1.500">
    <path d="M720.500 239V346"/><path d="M817.500 239V346"/>
    <path d="M674 269.500H729"/><path d="M675.500 390.500H710"/>
    <path d="M682.500 283V317"/><path d="M682.500 336V377"/>
  </g>
  <g stroke="#444" stroke-width="1">
    <path d="M735 247.500H759"/><path d="M779 247.500H803"/>
  </g>
  <g fill="#000" stroke="none">
    <path d="M722 247.600L735.600 244.200V251z"/><path d="M816.600 247.600L803 244.200V251z"/>
    <path d="M682.300 271L678.800 283H685.800z"/><path d="M682.300 389.700L678.800 377.200H685.800z"/>
  </g>
  <!-- centre line -->
  <path d="M769.500 262V423.500" stroke="#555" stroke-width=".9"/>
  <!-- outer profile -->
  <path d="M734 269.500H806c3.500 0 5 2 5 5.500V308l3 7v22.500l3.800 8.500v44.500h7v18l-7 7H720.800l-7.300-7v-18h7V346l4.500-8.500V315l4-7V275c0-3.500 1.500-5.500 5-5.500z" stroke="#222" stroke-width="1"/>
  <!-- bore -->
  <path d="M739.500 269.500V311.700M799.500 269.500V311.700M739.500 311.700H799.500M739.500 311.700L743 318.400M799.500 311.700L796.300 318.400" stroke="#111"/>
  <path d="M743 318.400H796.300" stroke="#000" stroke-width="1.400"/>
  <!-- thread -->
  <path d="M743.200 318.400V408.400M796.200 318.400V408.400" stroke="#666" stroke-width="1.700"/>
  <path d="M743 408.400H796.300" stroke="#000" stroke-width="1.300"/>
  <path d="M743 408.400L739.500 415.500M796.300 408.400L799.500 415.500" stroke="#111"/>
  <path d="M739.500 312.500V415M799.500 312.500V415" stroke="#000" stroke-width="1.300" stroke-dasharray="5 2"/>
</g>
<g font-family="'Liberation Sans',sans-serif" font-size="18" fill="#000" text-anchor="middle">
  <text x="769" y="254.700">A</text>
  <text x="683" y="332.500">B</text>
</g>

<g id="notes" font-family="'Liberation Serif',serif" font-size="15.73" fill="#000" stroke="#000" stroke-width=".15">
  <text x="728" y="498" textLength="42" lengthAdjust="spacing">NOTE</text>
  <text x="642.900" y="534" textLength="212.600" lengthAdjust="spacing" word-spacing="9.2">Service replacements for all</text>
  <text x="642.900" y="552" textLength="212.600" lengthAdjust="spacing" word-spacing="2.7">flange bushings are available in</text>
  <text x="642.900" y="570">the following oversizes.</text>
  <text x="643" y="607">P05</text><text x="707.300" y="607">P10</text><text x="771.300" y="607">P15</text><text x="855.500" y="607" text-anchor="end">P20</text>
  <rect x="642" y="608" width="214" height="1" fill="#000" stroke="none" shape-rendering="crispEdges"/>
  <text x="643" y="625">.005</text><text x="707.300" y="625">.010</text><text x="769.600" y="625">.015</text><text x="855.500" y="625" text-anchor="end">.020</text>
  <text x="135.600" y="681" font-size="15.86">Tool No. ST-115 is used to remove and replace all propeller flange bushings.</text>
</g>

</svg>
</body>
</html>
